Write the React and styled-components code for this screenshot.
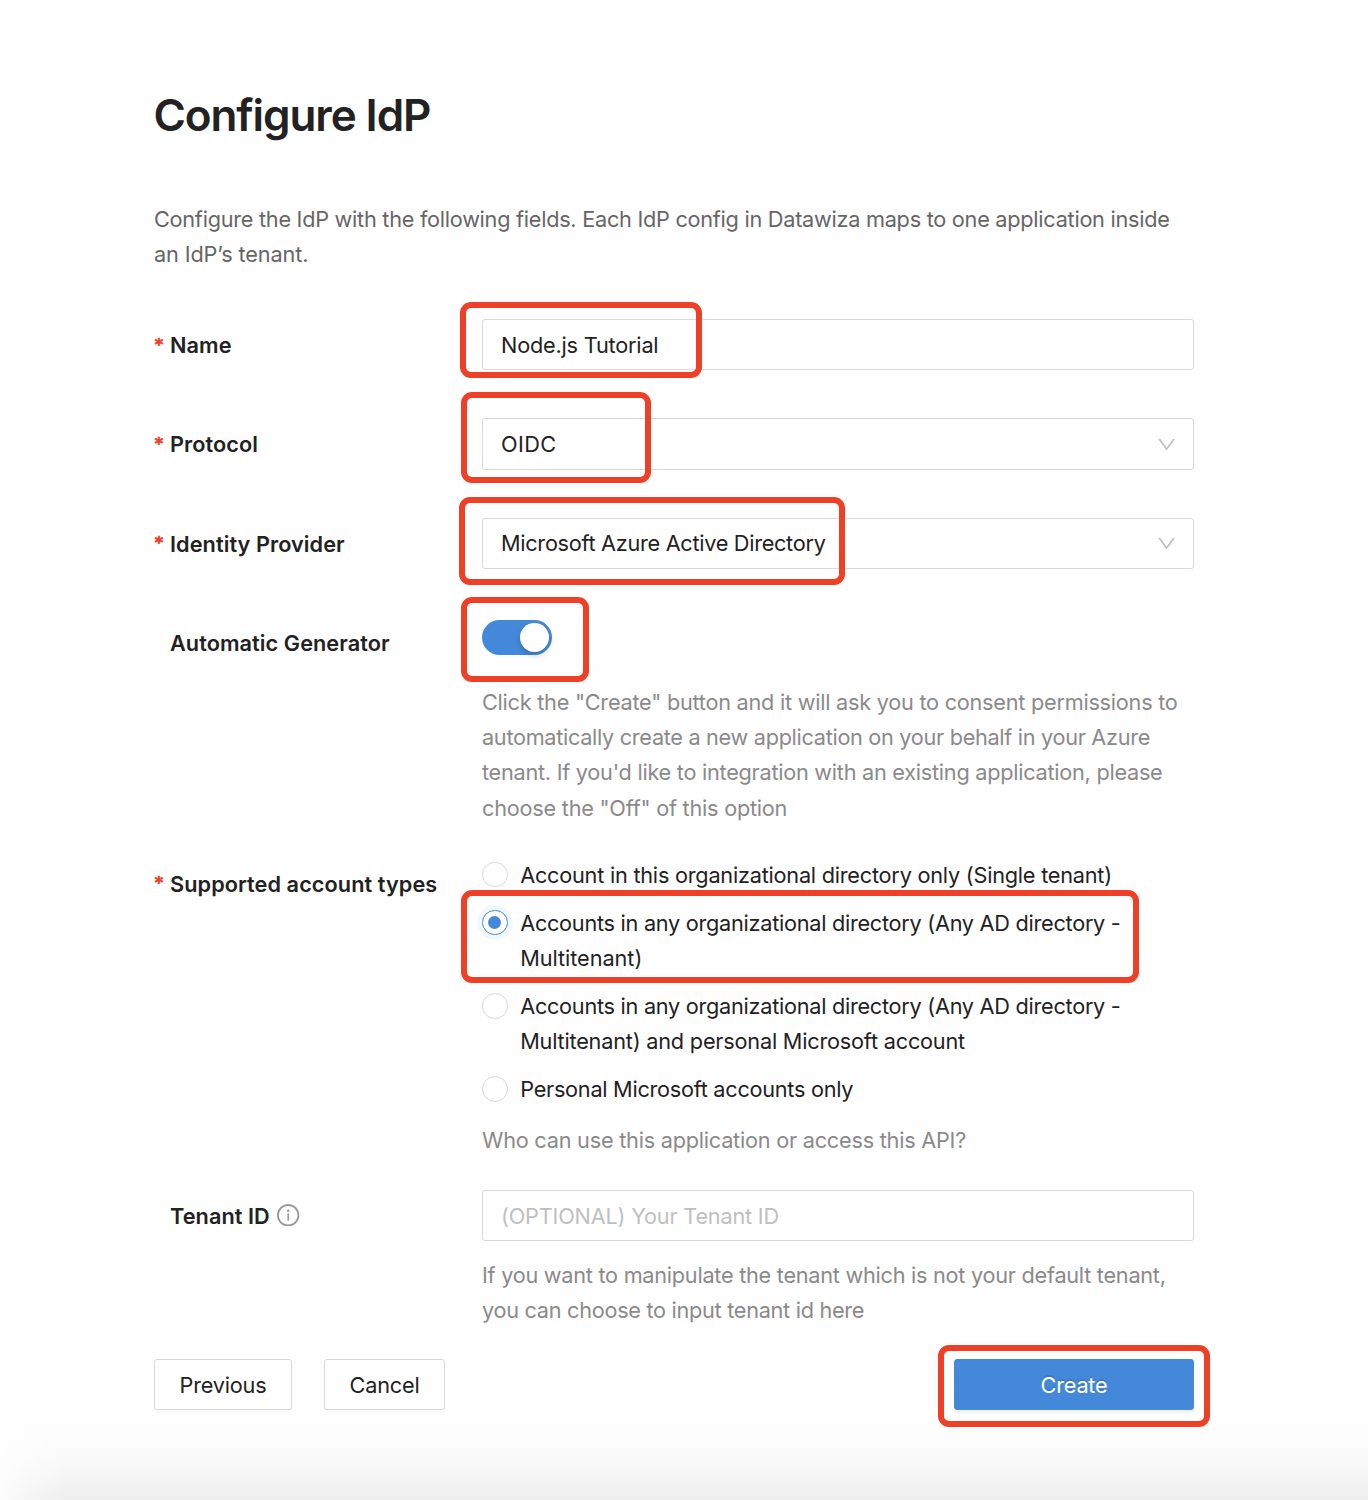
import React, { useState } from "react";
import styled, { createGlobalStyle } from "styled-components";

const GlobalStyle = createGlobalStyle`
  *, *::before, *::after { box-sizing: border-box; }
  body {
    margin: 0;
    background: #fefefe;
    color: #222;
    font-family: Inter, "Liberation Sans", sans-serif;
    font-size: 21.7px;
    line-height: 35.2px;
  }
`;

const Page = styled.main`
  position: relative;
  width: 1368px;
  height: 1500px;
  padding: 87px 174px 0 154px;
  overflow: hidden;

  &::after {
    content: "";
    position: absolute;
    inset: auto 0 0 0;
    height: 90px;
    pointer-events: none;
    background: linear-gradient(
      to bottom,
      rgba(0, 0, 0, 0) 0%,
      rgba(0, 0, 0, 0.004) 30%,
      rgba(0, 0, 0, 0.016) 54%,
      rgba(0, 0, 0, 0.03) 72%,
      rgba(0, 0, 0, 0.05) 88%,
      rgba(0, 0, 0, 0.064) 100%
    );
    mask-image: linear-gradient(to right, rgba(0, 0, 0, 0.05) 0, rgba(0, 0, 0, 0.5) 25px, #000 66px);
  }
`;

const Title = styled.h1`
  margin: 0 0 58.9px -0.5px;
  font-size: 44px;
  line-height: 56px;
  font-weight: 600;
  letter-spacing: -1.1px;
`;

const Line = styled.span`
  display: block;
  white-space: nowrap;
  letter-spacing: ${(p) => p.$track || 0}px;
`;

const Description = styled.p`
  margin: 0 0 46.9px;
  color: #666;
`;

const Form = styled.form`
  display: flex;
  flex-direction: column;
`;

const Field = styled.div`
  display: grid;
  grid-template-columns: 328px 712px;
  align-items: start;
  margin-bottom: ${(p) => p.$gap || 48}px;
`;

const Label = styled.label`
  display: flex;
  align-items: center;
  height: 51.2px;
  padding-top: 2.2px;
  font-weight: 600;
  letter-spacing: 0.07px;
  white-space: nowrap;
`;

const Mark = styled.span`
  width: 16px;
  margin-top: -3.4px;
  padding-left: 0.7px;
  flex: none;
  color: #f03a28;
  font-family: "DejaVu Sans", sans-serif;
  font-size: 16px;
  font-weight: 700;
  letter-spacing: 0;
  -webkit-text-stroke: 0.7px #f03a28;
`;

const InfoIcon = styled.svg`
  width: 22.4px;
  height: 22.4px;
  margin: -2.4px 0 0 7.4px;
  fill: #999;
`;

const Control = styled.div`
  position: relative;
`;

const TextInput = styled.input`
  display: block;
  width: 100%;
  height: 51.2px;
  padding: ${(p) => p.$drop || 0}px 18px 0;
  border: 1px solid #d9d9d9;
  border-radius: 3px;
  background: #fff;
  color: #222;
  font: inherit;
  letter-spacing: ${(p) => p.$track || 0}px;
  outline: none;

  &::placeholder { color: #bfbfbf; opacity: 1; }
`;

const SelectBox = styled.div`
  display: flex;
  align-items: center;
  justify-content: space-between;
  height: 51.2px;
  padding: ${(p) => p.$drop || 0}px 17px 0 18px;
  border: 1px solid #d9d9d9;
  border-radius: 3px;
  background: #fff;
`;

const Chevron = styled.svg`
  width: 19.2px;
  height: 19.2px;
  fill: #bfbfbf;
`;

const SwitchRow = styled.div`
  display: flex;
  height: 51.2px;
  padding-top: 3.2px;
`;

const Switch = styled.button`
  display: flex;
  justify-content: ${(p) => (p.$on ? "flex-end" : "flex-start")};
  align-items: center;
  width: 70.4px;
  height: 35.2px;
  padding: 0 3.2px;
  border: 0;
  border-radius: 18px;
  background: ${(p) => (p.$on ? "#4489d9" : "#bfbfbf")};
`;

const Knob = styled.span`
  width: 28.8px;
  height: 28.8px;
  border-radius: 50%;
  background: #fff;
  box-shadow: 0 3.2px 6.4px rgba(0, 35, 11, 0.2);
`;

const Help = styled.div`
  margin-top: ${(p) => p.$gap || 16}px;
  color: #8a8a8a;
`;

const RadioGroup = styled.div`
  display: flex;
  flex-direction: column;
  gap: 12.8px;
`;

const RadioOption = styled.div`
  position: relative;
  display: flex;
  gap: 12.6px;
`;

const RadioCircle = styled.span`
  display: grid;
  place-items: center;
  flex: none;
  width: 25.6px;
  height: 25.6px;
  margin-top: 4.2px;
  border: 1px solid ${(p) => (p.$checked ? "#4489d9" : "#d9d9d9")};
  border-radius: 50%;
  background: #fff;
  box-shadow: ${(p) => (p.$checked ? "0 0 0 4.8px #f0f8fe" : "none")};
`;

const RadioDot = styled.span`
  width: 13px;
  height: 13px;
  border-radius: 50%;
  background: #4489d9;
`;

const Highlight = styled.span`
  position: absolute;
  z-index: 1;
  top: ${(p) => p.$top}px;
  left: ${(p) => p.$left}px;
  width: ${(p) => p.$width}px;
  height: ${(p) => p.$height}px;
  border: 6px solid #ee4026;
  border-radius: 11px;
  pointer-events: none;
`;

const Actions = styled.div`
  display: flex;
  gap: 32px;
`;

const Button = styled.button`
  width: ${(p) => p.$width}px;
  height: 51.2px;
  padding: 1.4px 0 0;
  border: 1px solid #d9d9d9;
  border-radius: 3px;
  background: #fff;
  color: #222;
  font: inherit;
  letter-spacing: -0.2px;
  box-shadow: 0 3.2px 0 rgba(0, 0, 0, 0.016);
`;

const PrimaryButton = styled(Button)`
  width: 240px;
  border-color: #4489d9;
  background: #4489d9;
  color: #fff;
  text-shadow: 0 -1.6px 0 rgba(0, 0, 0, 0.12);
  box-shadow: 0 3.2px 0 rgba(0, 0, 0, 0.045);
`;

const PrimaryAction = styled.div`
  position: relative;
  margin-left: auto;
`;

const DESCRIPTION = [
  ["Configure the IdP with the following fields. Each IdP config in Datawiza maps to one application inside", -0.262],
  ["an IdP’s tenant.", -0.12],
];

const GENERATOR_HELP = [
  ['Click the "Create" button and it will ask you to consent permissions to', -0.248],
  ["automatically create a new application on your behalf in your Azure", -0.309],
  ["tenant. If you'd like to integration with an existing application, please", -0.262],
  ['choose the "Off" of this option', -0.235],
];

const TENANT_HELP = [
  ["If you want to manipulate the tenant which is not your default tenant,", -0.262],
  ["you can choose to input tenant id here", -0.29],
];

const ACCOUNT_TYPES = [
  [["Account in this organizational directory only (Single tenant)", -0.23]],
  [
    ["Accounts in any organizational directory (Any AD directory -", -0.27],
    ["Multitenant)", -0.05],
  ],
  [
    ["Accounts in any organizational directory (Any AD directory -", -0.27],
    ["Multitenant) and personal Microsoft account", -0.207],
  ],
  [["Personal Microsoft accounts only", -0.27]],
];

function Lines({ items }) {
  return items.map(([text, track]) => (
    <Line key={text} $track={track}>
      {text}
    </Line>
  ));
}

function FieldLabel({ required, children }) {
  return (
    <Label>
      <Mark>{required ? "*" : ""}</Mark>
      {children}
    </Label>
  );
}

function Select({ value, track, drop }) {
  return (
    <SelectBox $drop={drop}>
      <Line $track={track}>{value}</Line>
      <Chevron viewBox="64 64 896 896">
        <path d="M884 256h-75c-5.1 0-9.9 2.5-12.9 6.6L512 654.2 227.9 262.6c-3-4.1-7.8-6.6-12.9-6.6h-75c-6.5 0-10.3 7.4-6.5 12.7l352.6 486.1c12.8 17.6 39 17.6 51.7 0l352.6-486.1c3.9-5.3.1-12.7-6.4-12.7z" />
      </Chevron>
    </SelectBox>
  );
}

export default function App() {
  const [name, setName] = useState("Node.js Tutorial");
  const [automatic, setAutomatic] = useState(true);
  const [accountType, setAccountType] = useState(1);

  return (
    <>
      <GlobalStyle />
      <Page>
        <Title>Configure IdP</Title>
        <Description>
          <Lines items={DESCRIPTION} />
        </Description>
        <Form onSubmit={(e) => e.preventDefault()}>
          <Field>
            <FieldLabel required>Name</FieldLabel>
            <Control>
              <TextInput $track={-0.2} value={name} onChange={(e) => setName(e.target.value)} />
              <Highlight $top={-17} $left={-21.6} $width={241.6} $height={76} />
            </Control>
          </Field>
          <Field>
            <FieldLabel required>Protocol</FieldLabel>
            <Control>
              <Select value="OIDC" track={0.4} drop={0.8} />
              <Highlight $top={-26.4} $left={-20.6} $width={189.4} $height={91} />
            </Control>
          </Field>
          <Field>
            <FieldLabel required>Identity Provider</FieldLabel>
            <Control>
              <Select value="Microsoft Azure Active Directory" track={-0.29} />
              <Highlight $top={-20.8} $left={-22.8} $width={385.8} $height={88.4} />
            </Control>
          </Field>
          <Field $gap={31.8}>
            <FieldLabel>Automatic Generator</FieldLabel>
            <Control>
              <SwitchRow>
                <Switch type="button" $on={automatic} onClick={() => setAutomatic(!automatic)}>
                  <Knob />
                </Switch>
              </SwitchRow>
              <Help $gap={17}>
                <Lines items={GENERATOR_HELP} />
              </Help>
              <Highlight $top={-19.4} $left={-20.6} $width={128} $height={85} />
            </Control>
          </Field>
          <Field $gap={31.2}>
            <FieldLabel required>Supported account types</FieldLabel>
            <Control>
              <RadioGroup>
                {ACCOUNT_TYPES.map((lines, i) => (
                  <RadioOption key={i} onClick={() => setAccountType(i)}>
                    <RadioCircle $checked={accountType === i}>
                      {accountType === i && <RadioDot />}
                    </RadioCircle>
                    <div>
                      <Lines items={lines} />
                    </div>
                    {i === 1 && <Highlight $top={-16} $left={-20.6} $width={677.4} $height={93} />}
                  </RadioOption>
                ))}
              </RadioGroup>
              <Help>
                <Line $track={-0.235}>Who can use this application or access this API?</Line>
              </Help>
            </Control>
          </Field>
          <Field $gap={31}>
            <FieldLabel>
              Tenant ID
              <InfoIcon viewBox="64 64 896 896">
                <path d="M512 64C264.6 64 64 264.6 64 512s200.6 448 448 448 448-200.6 448-448S759.4 64 512 64zm0 820c-205.4 0-372-166.6-372-372s166.6-372 372-372 372 166.6 372 372-166.6 372-372 372z" />
                <path d="M464 336a48 48 0 1096 0 48 48 0 10-96 0zm72 112h-48c-4.4 0-8 3.6-8 8v272c0 4.4 3.6 8 8 8h48c4.4 0 8-3.6 8-8V456c0-4.4-3.6-8-8-8z" />
              </InfoIcon>
            </FieldLabel>
            <Control>
              <TextInput $drop={1.4} $track={-0.2} placeholder="(OPTIONAL) Your Tenant ID" />
              <Help $gap={16.8}>
                <Lines items={TENANT_HELP} />
              </Help>
            </Control>
          </Field>
          <Actions>
            <Button type="button" $width={138}>Previous</Button>
            <Button type="button" $width={121}>Cancel</Button>
            <PrimaryAction>
              <PrimaryButton type="submit">Create</PrimaryButton>
              <Highlight $top={-14.2} $left={-16} $width={272} $height={82} />
            </PrimaryAction>
          </Actions>
        </Form>
      </Page>
    </>
  );
}
